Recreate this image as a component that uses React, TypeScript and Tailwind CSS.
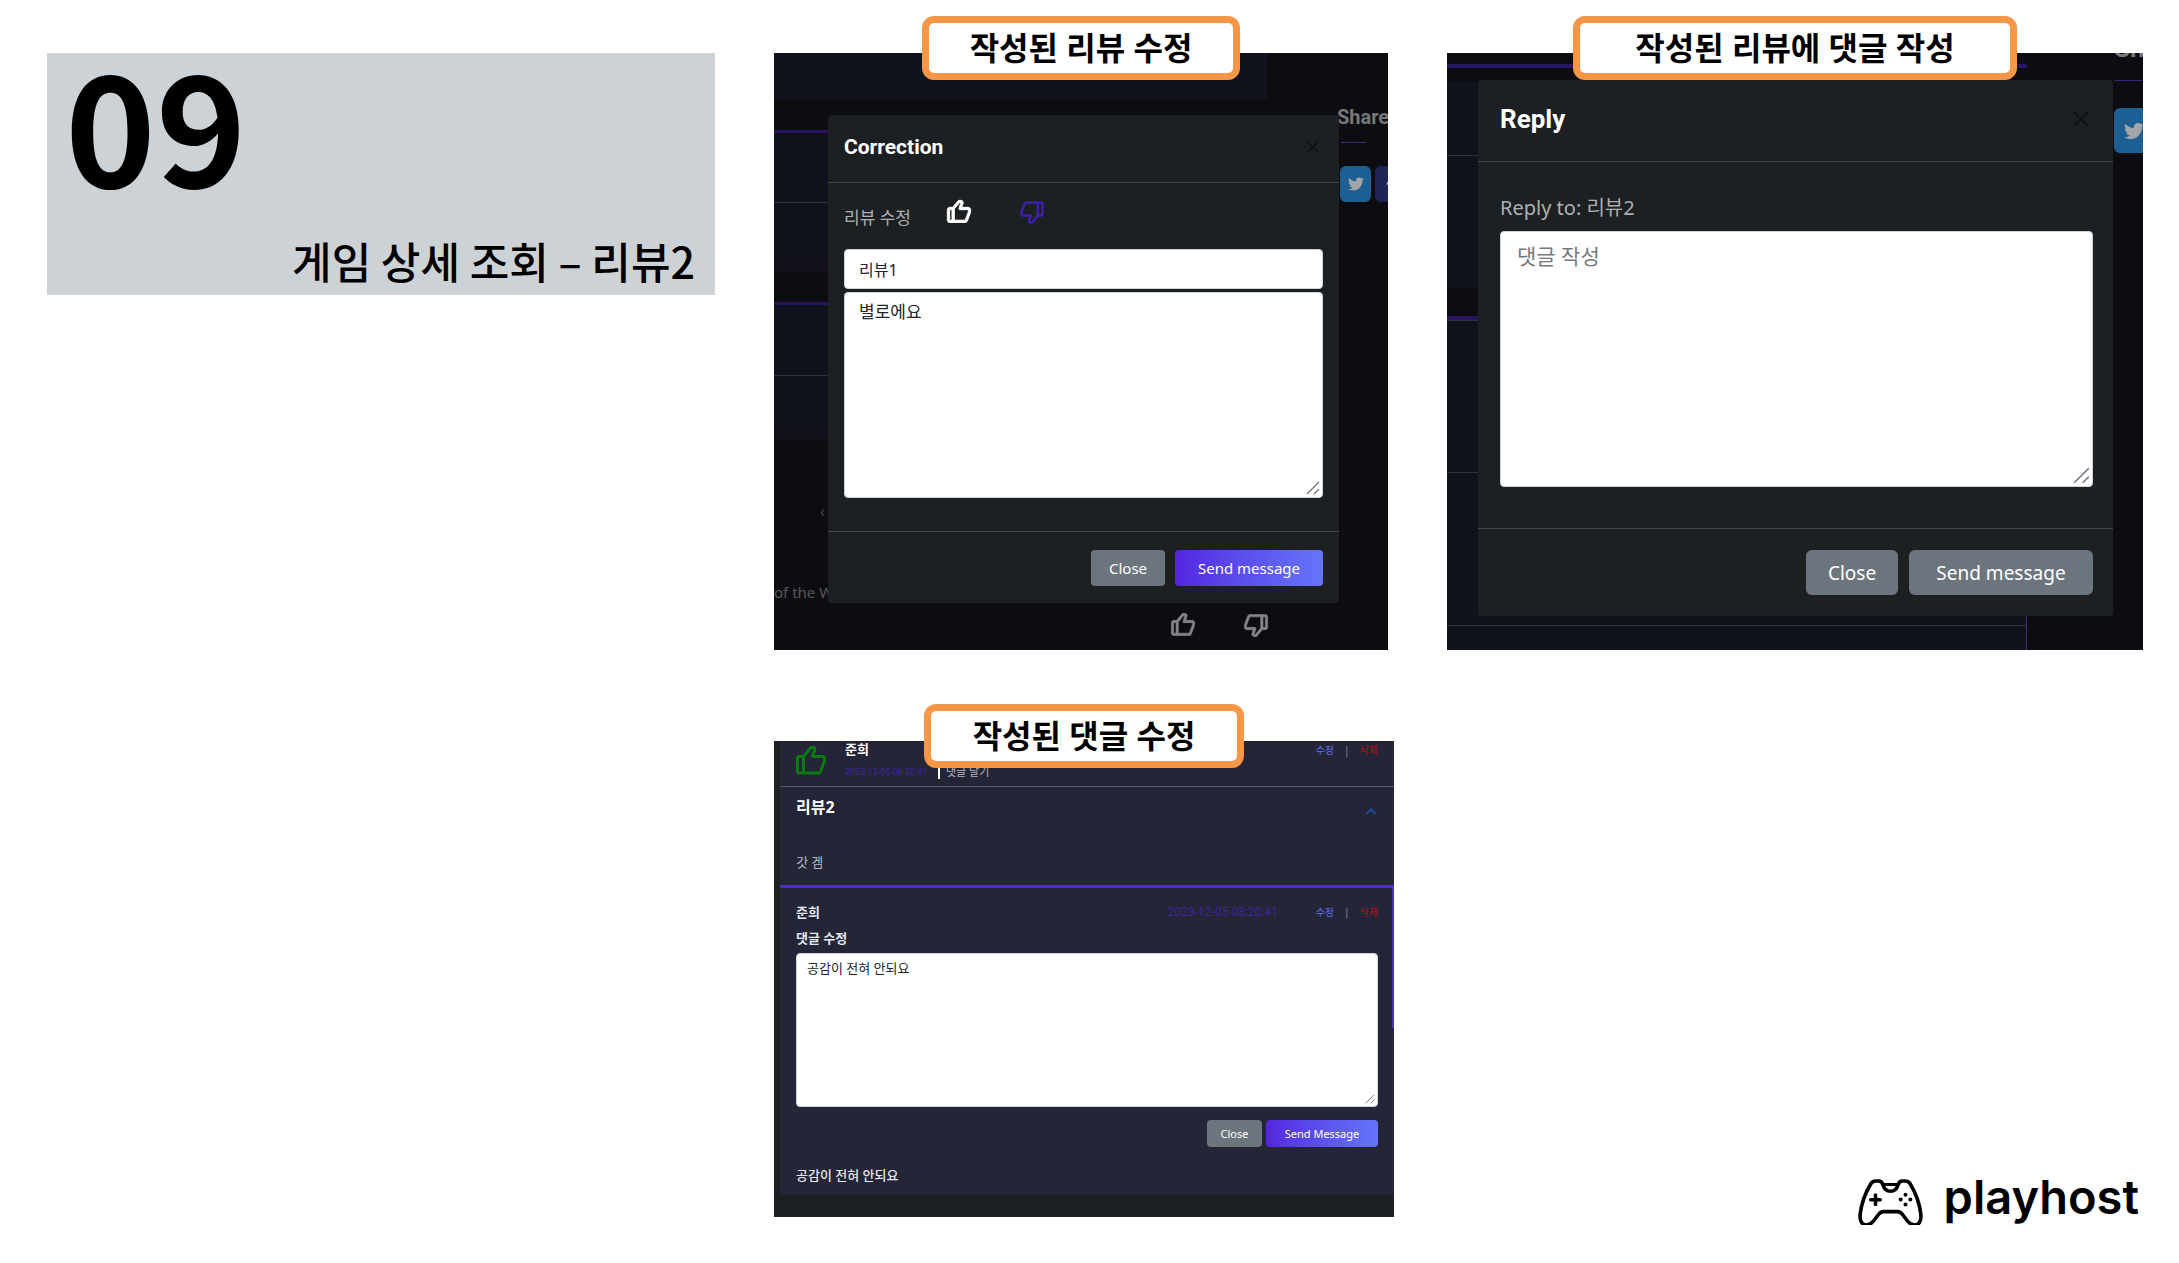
/**
 * 09 — 게임 상세 조회 – 리뷰2
 * Slide with three review dialogs: edit review, reply to review, edit reply.
 */
import React from 'react';
import { BiChevronUp, BiDislike, BiLike } from 'react-icons/bi';
import { FaFacebookF, FaTwitter } from 'react-icons/fa';
import { LuX } from 'react-icons/lu';

/* ── SHARED CLASSES ─────────────────────────────────────────────────────── */

const BTN_GRAY = 'bg-[#6c757d] text-white';
const BTN_PURPLE = 'bg-linear-to-r from-[#5423e0] to-[#6574fb] text-white';
const FIELD = 'block w-full rounded border border-[#ced4da] bg-white text-[#212529]';

/* ── PANEL ──────────────────────────────────────────────────────────────── */

interface PanelProps {
  title: string;
  titleClass: string;
  className?: string;
  children: React.ReactNode;
}

function Panel({ title, titleClass, className = '', children }: PanelProps) {
  return (
    <section className={`relative ${className}`}>
      <div className="relative overflow-hidden">{children}</div>
      <h2
        className={`absolute -top-[37px] left-1/2 flex h-16 -translate-x-1/2 items-center justify-center rounded-xl border-[7px] border-[#f79646] bg-white text-[32px] leading-10 font-bold whitespace-nowrap text-black ${titleClass}`}
      >
        {title}
      </h2>
    </section>
  );
}

/* ── TEXT AREA ──────────────────────────────────────────────────────────── */

interface TextAreaProps extends React.TextareaHTMLAttributes<HTMLTextAreaElement> {
  gripClass: string;
}

function TextArea({ gripClass, className = '', ...rest }: TextAreaProps) {
  return (
    <div className="relative">
      <textarea className={`${FIELD} resize-none ${className}`} {...rest} />
      <svg
        viewBox="0 0 14 14"
        className={`pointer-events-none absolute right-[3px] bottom-[3px] ${gripClass}`}
        fill="none"
        stroke="#6f7072"
        strokeWidth="1.2"
      >
        <path d="M1 13L13 1M8 13L13 8" />
      </svg>
    </div>
  );
}

/* ── BACKDROPS ──────────────────────────────────────────────────────────── */

function CorrectionBackdrop() {
  return (
    <div className="flex bg-[#0d0c11]">
      <div className="w-[493px] shrink-0">
        <div className="h-[47px] bg-[#10131b]" />
        <div className="mt-[30px] h-[3px] bg-[#28135f]" />
        <div className="h-[70px] border-b border-[#30333a] bg-[#10131b]" />
        <div className="h-[69px] bg-linear-to-b from-[#10131b] from-60% to-[#130f1b]" />
        <div className="mt-[30px] h-[3px] bg-[#28135f]" />
        <div className="h-[71px] border-b border-[#30333a] bg-[#10131b]" />
        <div className="h-16 bg-linear-to-b from-[#10131b] from-60% to-[#130f1b]" />
        <div className="mt-[60px] h-[22px] pl-[46px] text-base leading-[22px] text-[#4a4a4d]">‹</div>
        <p className="mt-[59px] h-[22px] text-[15px] leading-[22px] text-[#57575a]">of the W</p>
        <div className="mt-2 flex gap-[45px] pb-[11px] pl-[395px] text-[28px] text-[#858587]">
          <BiLike className="shrink-0 stroke-[0.5]" />
          <BiDislike className="shrink-0 stroke-[0.5]" />
        </div>
      </div>
      <div className="min-w-0 flex-1 overflow-hidden pt-[51px] pl-[70px]">
        <p className="font-['Roboto',sans-serif] text-xl leading-[26px] font-bold text-[#77777a]">Share</p>
        <div className="mt-3 ml-1 h-px w-[25px] bg-[#3a2a80]" />
        <div className="mt-[23px] ml-[3px] flex gap-1">
          <span className="flex h-9 w-[31px] shrink-0 items-center justify-center rounded-md bg-[#1d5f92] text-base text-[#a3a5a8]">
            <FaTwitter />
          </span>
          <span className="flex h-9 w-[31px] shrink-0 items-center justify-center rounded-md bg-[#1c2553] text-base text-[#a3a5a8]">
            <FaFacebookF />
          </span>
        </div>
      </div>
    </div>
  );
}

function ReplyBackdrop() {
  return (
    <div className="flex bg-[#0d0c11]">
      <div className="w-[580px] shrink-0">
        <div className="mt-[11px] h-1 bg-[#26155f]" />
        <div className="mt-[14px] h-[74px] border-b border-[#30333a] bg-[#10131b]" />
        <div className="h-[132px] bg-[#10131b]" />
        <div className="mt-7 h-1 bg-[#28155f]" />
        <div className="border-r border-[#3a3188]">
          <div className="h-[153px] border-y border-[#30333a] bg-[#10131b]" />
          <div className="h-[153px] border-b border-[#30333a] bg-[#10131b]" />
          <div className="h-6 bg-[#10131b]" />
        </div>
      </div>
      <div className="min-w-0 flex-1 overflow-hidden pl-[87px]">
        <p className="-mt-[18px] font-['Roboto',sans-serif] text-[26px] leading-[26px] font-bold text-[#77777a]">Share</p>
        <div className="mt-[19px] h-px bg-[#35257c]" />
        <div className="mt-[27px] flex">
          <span className="flex h-[45px] w-10 shrink-0 items-center justify-center rounded-md bg-[#1d5f92] text-xl text-[#a3a5a8]">
            <FaTwitter />
          </span>
        </div>
      </div>
    </div>
  );
}

/* ── DIALOGS ────────────────────────────────────────────────────────────── */

function CorrectionDialog() {
  return (
    <div
      role="dialog"
      aria-label="Correction"
      className="absolute top-[62px] right-[49px] left-[54px] rounded-sm bg-[#1d2023]"
    >
      <header className="flex h-[68px] items-center justify-between border-b border-[#43464a] px-4 pb-1">
        <h3 className="font-['Roboto',sans-serif] text-[21px] leading-6 font-bold text-white">Correction</h3>
        <button type="button" aria-label="닫기" className="text-xl text-[#101113]">
          <LuX />
        </button>
      </header>
      <div className="px-4 pb-[33px]">
        <div className="flex h-[66px] items-center pt-[3px]">
          <label htmlFor="review-title" className="w-[101px] text-[17px] leading-6 text-[#adafb2]">
            리뷰 수정
          </label>
          <div className="mb-3 flex gap-[45px] text-[28px]">
            <button type="button" aria-label="추천" className="text-white">
              <BiLike className="stroke-[0.8]" />
            </button>
            <button type="button" aria-label="비추천" className="text-[#3f1fb0]">
              <BiDislike />
            </button>
          </div>
        </div>
        <input
          id="review-title"
          type="text"
          defaultValue="리뷰1"
          className={`${FIELD} h-10 px-[14px] text-base leading-6`}
        />
        <TextArea
          aria-label="리뷰 내용"
          defaultValue="별로에요"
          gripClass="size-3.5"
          className="mt-[3px] h-[206px] px-[14px] py-[7px] text-[17px] leading-6"
        />
      </div>
      <footer className="flex justify-end gap-[10px] border-t border-[#43464a] px-4 pt-[18px] pb-[17px] text-[15px] leading-5">
        <button type="button" className={`h-9 w-[74px] rounded ${BTN_GRAY}`}>
          Close
        </button>
        <button type="button" className={`h-9 w-[148px] rounded ${BTN_PURPLE}`}>
          Send message
        </button>
      </footer>
    </div>
  );
}

function ReplyDialog() {
  return (
    <div
      role="dialog"
      aria-label="Reply"
      className="absolute top-[27px] right-[30px] left-[31px] rounded-sm bg-[#1d2023]"
    >
      <header className="flex h-[82px] items-center justify-between border-b border-[#43464a] pr-5 pb-1 pl-[22px]">
        <h3 className="font-['Roboto',sans-serif] text-[26px] leading-8 font-bold text-white">Reply</h3>
        <button type="button" aria-label="닫기" className="text-2xl text-[#101113]">
          <LuX />
        </button>
      </header>
      <div className="pt-[31px] pr-5 pb-[41px] pl-[22px]">
        <label htmlFor="reply-text" className="block text-xl leading-[30px] text-[#adafb2]">
          Reply to: 리뷰2
        </label>
        <TextArea
          id="reply-text"
          placeholder="댓글 작성"
          gripClass="size-[17px]"
          className="mt-2 h-64 px-4 py-[9px] text-[21px] leading-[30px] placeholder:text-[#75797d]"
        />
      </div>
      <footer className="flex justify-end gap-[11px] border-t border-[#43464a] px-5 py-[21px] text-[19px] leading-6">
        <button type="button" className={`h-[45px] w-[92px] rounded-md ${BTN_GRAY}`}>
          Close
        </button>
        <button type="button" className={`h-[45px] w-[184px] rounded-md ${BTN_GRAY}`}>
          Send message
        </button>
      </footer>
    </div>
  );
}

/* ── COMMENT THREAD ─────────────────────────────────────────────────────── */

function EditDeleteLinks() {
  return (
    <div className="flex shrink-0 gap-2.5 text-[10px] leading-[14px]">
      <a href="#edit" className="text-[#5f6df0]">수정</a>
      <span className="text-[#8a8b95]">|</span>
      <a href="#delete" className="text-[#b90c22]">삭제</a>
    </div>
  );
}

function CommentThread() {
  return (
    <div className="bg-[#1d2022] pb-[22px] pl-1.5">
      <div className="bg-[#242536]">
        <div className="flex h-[46px] items-start border-b border-[#5a5b66] pr-4 pl-[13px]">
          <BiLike className="mt-0.5 shrink-0 text-4xl text-[#0a7a14]" />
          <div className="ml-4 flex-1">
            <p className="-mt-0.5 text-[13px] leading-5 font-bold text-white">준희</p>
            <div className="mt-1.5 flex items-center leading-[14px]">
              <time className="w-[93px] font-['Roboto',sans-serif] text-[9px] text-[#40239f]">2023-12-05 08:20:41</time>
              <span className="h-3.5 w-0.5 bg-white" />
              <a href="#reply" className="ml-1.5 text-[11px] text-[#b4b5bd]">댓글 달기</a>
            </div>
          </div>
          <div className="mt-0.5">
            <EditDeleteLinks />
          </div>
        </div>

        <div className="px-4 pt-2 pb-[13px]">
          <div className="flex items-center justify-between">
            <h3 className="text-base leading-6 font-bold text-white">리뷰2</h3>
            <button type="button" aria-label="접기" className="-mr-1 -mb-1 self-end text-[22px] text-[#1b4f9c]">
              <BiChevronUp />
            </button>
          </div>
          <p className="mt-[33px] text-[13px] leading-5 text-[#b9bac2]">갓 겜</p>
        </div>

        <div className="relative border-t-[3px] border-[#4a2fc4] px-4 pt-[14px] pb-2.5">
          <span className="absolute top-0 right-0 h-[140px] w-0.5 bg-[#4b35ac]" />
          <div className="flex items-center">
            <p className="flex-1 text-[13px] leading-5 font-bold text-[#e6e6ec]">준희</p>
            <time className="mr-[38px] font-['Roboto',sans-serif] text-xs text-[#40239f]">2023-12-05 08:20:41</time>
            <EditDeleteLinks />
          </div>
          <label htmlFor="comment-text" className="mt-1.5 block text-[13px] leading-5 font-bold text-[#e6e6ec]">
            댓글 수정
          </label>
          <TextArea
            id="comment-text"
            defaultValue="공감이 전혀 안되요"
            gripClass="size-2.5"
            className="mt-[5px] h-[154px] px-2.5 py-1 text-[13px] leading-5"
          />
          <div className="mt-[13px] flex justify-end gap-1 text-[11px] leading-4">
            <button type="button" className={`h-[27px] w-[55px] rounded-sm ${BTN_GRAY}`}>
              Close
            </button>
            <button type="button" className={`h-[27px] w-28 rounded-sm ${BTN_PURPLE}`}>
              Send Message
            </button>
          </div>
          <p className="mt-[18px] text-[13px] leading-5 font-medium text-[#e6e6ec]">공감이 전혀 안되요</p>
        </div>
      </div>
    </div>
  );
}

/* ── LOGO ───────────────────────────────────────────────────────────────── */

function Logo() {
  return (
    <div className="mr-1 flex h-12 items-start gap-[21px] self-end justify-self-end">
      <svg viewBox="0 0 65 46" className="mt-0.5 h-[46px] w-[65px]" fill="none" stroke="#000" strokeWidth="3.6">
        <path
          strokeLinejoin="round"
          d="M13 4.500C14.300 2.600 16 2 18 2H20.500C23 2 24.300 3.200 25 6C26.200 10 28.800 12.300 32.500 12.300S38.800 10 40 6C40.700 3.200 42 2 44.500 2H47C49 2 50.700 2.600 52 4.500C57.500 13.500 61.500 24 62.800 35C63.700 42.800 60.500 46 56.500 46C53.500 46 51.500 44.500 49.500 42L44.500 35.500C43.200 33.500 42 32.600 39.500 32.600H25.500C23 32.600 21.800 33.500 20.500 35.500L15.500 42C13.500 44.500 11.500 46 8.500 46C4.500 46 1.300 42.800 2.200 35C3.500 24 7.500 13.500 13 4.500Z"
        />
        <path strokeWidth="3" d="M25 5.500H40" />
        <path strokeLinecap="round" d="M17.500 16V25.500M12.800 20.700H22.200" />
        <g fill="#000" stroke="none">
          <circle cx="47.500" cy="15.800" r="2" />
          <circle cx="47.500" cy="25.400" r="2" />
          <circle cx="42.700" cy="20.600" r="2" />
          <circle cx="52.300" cy="20.600" r="2" />
        </g>
      </svg>
      <span className="font-['Inter',sans-serif] text-[47px] leading-[40px] font-semibold text-black">playhost</span>
    </div>
  );
}

/* ── PAGE ───────────────────────────────────────────────────────────────── */

export default function App() {
  return (
    <main className="grid min-h-screen grid-cols-[minmax(0,668fr)_minmax(0,614fr)_minmax(0,696fr)] content-start gap-x-[59px] gap-y-[91px] bg-white pt-[53px] pr-9 pl-[47px] font-['Noto_Sans','Noto_Sans_CJK_KR',sans-serif]">
      <header className="flex h-[242px] flex-col justify-between self-start bg-[#cdd2d6] pr-5 pb-[3px] pl-[18px] font-['Noto_Sans_CJK_KR',sans-serif] text-black">
        <p className="text-[154px] leading-[136px] font-bold">09</p>
        <h1 className="text-right text-[43px] leading-[64px] font-medium">게임 상세 조회 – 리뷰2</h1>
      </header>

      <Panel title="작성된 리뷰 수정" titleClass="w-[318px]">
        <CorrectionBackdrop />
        <CorrectionDialog />
      </Panel>

      <Panel title="작성된 리뷰에 댓글 작성" titleClass="w-[444px]">
        <ReplyBackdrop />
        <ReplyDialog />
      </Panel>

      <Panel title="작성된 댓글 수정" titleClass="w-[320px]" className="col-start-2 -mr-1.5 pb-2">
        <CommentThread />
      </Panel>

      <Logo />
    </main>
  );
}
